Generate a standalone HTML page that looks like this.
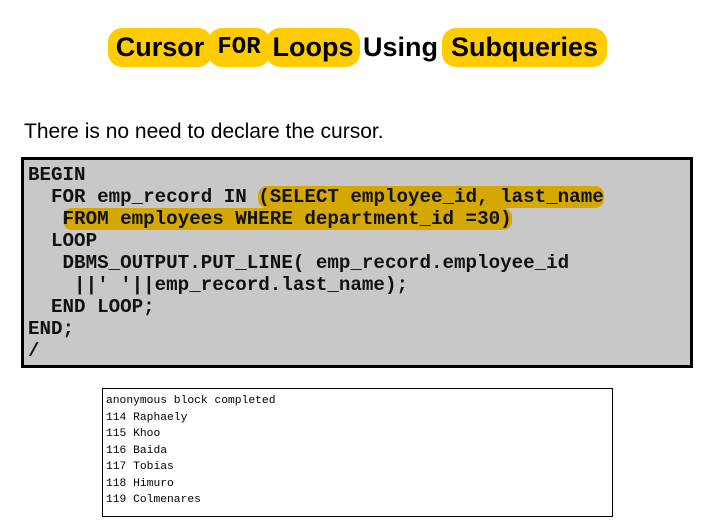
<!DOCTYPE html>
<html><head><meta charset="utf-8"><style>
body{margin:0;width:711px;height:528px;background:#fff;position:relative;overflow:hidden;font-family:"Liberation Sans",sans-serif}
.t{position:absolute;top:28px;height:39px;line-height:39px;font-weight:bold;font-size:27px;color:#000}
.p{background:#ffcc00;border-radius:14px;position:absolute;top:0;height:39px;text-align:center}
.sub{position:absolute;left:24px;top:120px;font-size:21px;color:#000}
.code{position:absolute;left:21px;top:157px;width:666px;height:205px;border:3px solid #000;background:#c8c8c8}
.code pre{margin:0;position:absolute;left:4px;top:4px;font-family:"Liberation Mono",monospace;font-weight:bold;font-size:19.2px;line-height:22px;color:#111}
.hl{background:#d4a800;border-radius:9px}
.out{position:absolute;left:102px;top:388px;width:509px;height:127px;border:1px solid #000}
.out pre{margin:0;position:absolute;left:3px;top:4px;font-family:"Liberation Mono",monospace;font-size:11.3px;line-height:16.5px;color:#000}
</style></head><body>
<div class="t" style="left:0;width:711px">
<span class="p" style="left:108px;width:104px">Cursor</span>
<span class="p" style="left:208px;width:62px;font-family:'Liberation Mono',monospace;font-size:24px">FOR</span>
<span class="p" style="left:266px;width:94px">Loops</span>
<span style="position:absolute;left:363px">Using</span>
<span class="p" style="left:442px;width:165px">Subqueries</span>
</div>
<div class="sub">There is no need to declare the cursor.</div>
<div class="code"><pre>BEGIN
  FOR emp_record IN <span class="hl">(SELECT employee_id, last_name</span>
   <span class="hl">FROM employees WHERE department_id =30)</span>
  LOOP
   DBMS_OUTPUT.PUT_LINE( emp_record.employee_id
    ||' '||emp_record.last_name);
  END LOOP;
END;
/</pre></div>
<div class="out"><pre>anonymous block completed
114 Raphaely
115 Khoo
116 Baida
117 Tobias
118 Himuro
119 Colmenares</pre></div>
</body></html>
